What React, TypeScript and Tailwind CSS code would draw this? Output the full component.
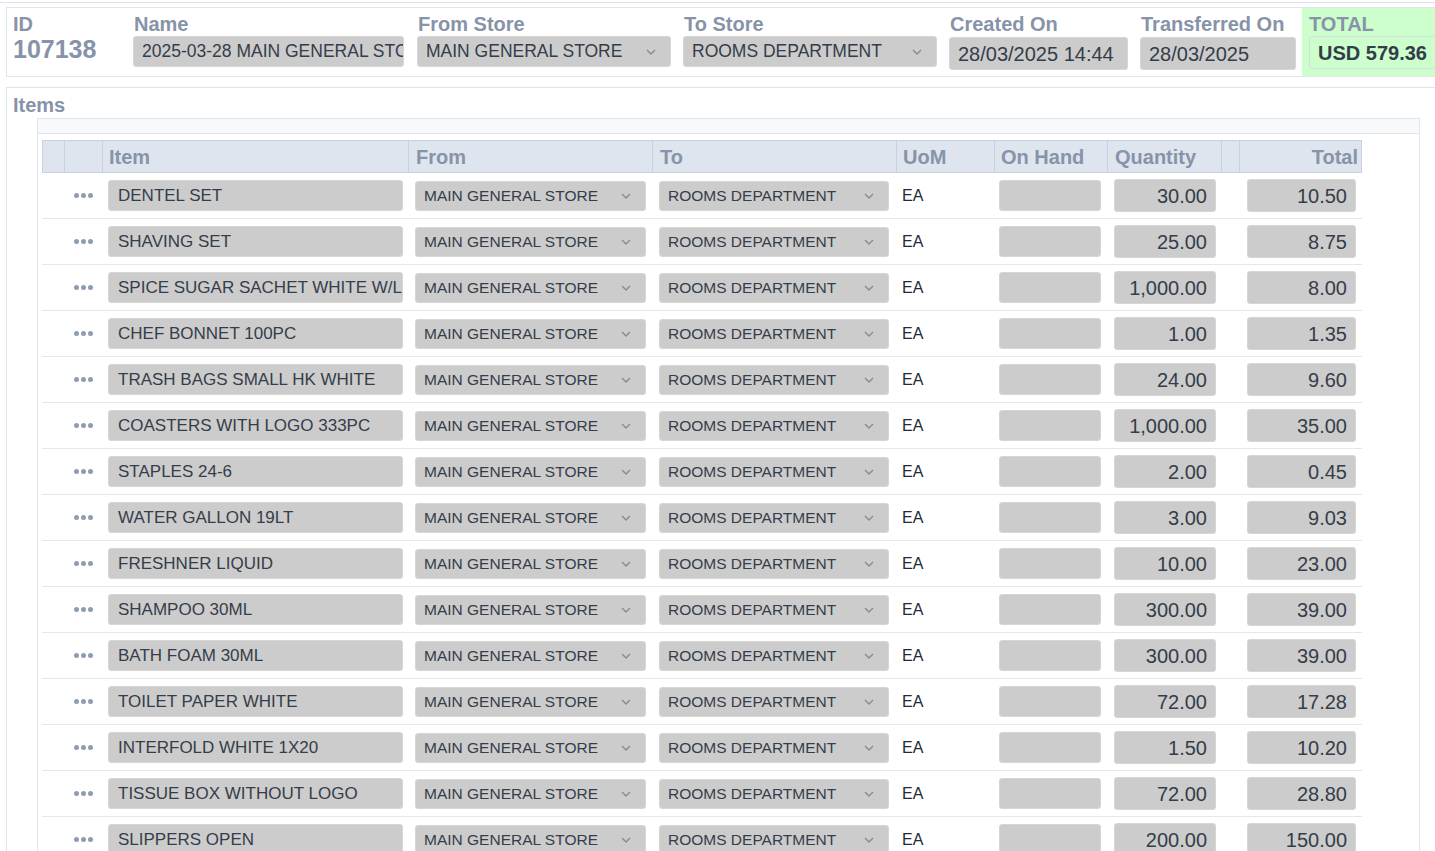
import React from 'react';

type Row = { item: string; qty: string; total: string };

const rows: Row[] = [
  { item: 'DENTEL SET', qty: '30.00', total: '10.50' },
  { item: 'SHAVING SET', qty: '25.00', total: '8.75' },
  { item: 'SPICE SUGAR SACHET WHITE W/LOGO', qty: '1,000.00', total: '8.00' },
  { item: 'CHEF BONNET 100PC', qty: '1.00', total: '1.35' },
  { item: 'TRASH BAGS SMALL HK WHITE', qty: '24.00', total: '9.60' },
  { item: 'COASTERS WITH LOGO 333PC', qty: '1,000.00', total: '35.00' },
  { item: 'STAPLES 24-6', qty: '2.00', total: '0.45' },
  { item: 'WATER GALLON 19LT', qty: '3.00', total: '9.03' },
  { item: 'FRESHNER LIQUID', qty: '10.00', total: '23.00' },
  { item: 'SHAMPOO 30ML', qty: '300.00', total: '39.00' },
  { item: 'BATH FOAM 30ML', qty: '300.00', total: '39.00' },
  { item: 'TOILET PAPER WHITE', qty: '72.00', total: '17.28' },
  { item: 'INTERFOLD WHITE 1X20', qty: '1.50', total: '10.20' },
  { item: 'TISSUE BOX WITHOUT LOGO', qty: '72.00', total: '28.80' },
  { item: 'SLIPPERS OPEN', qty: '200.00', total: '150.00' },
];

const cols = 'grid grid-cols-[22px_38px_306px_244px_244px_98px_113px_114px_18px_123px]';

const Chevron = () => (
  <svg width="10" height="6" viewBox="0 0 10 6" className="shrink-0">
    <path d="M1 1l4 4 4-4" fill="none" stroke="#8a8a8a" strokeWidth="1.3" />
  </svg>
);

const Field: React.FC<{ label: string; className: string; children: React.ReactNode }> = ({ label, className, children }) => (
  <div className={`flex flex-col pt-[4px] ${className}`}>
    <span className="text-[20px] font-bold leading-[24px] text-[#8793a8] pl-[1px]">{label}</span>
    {children}
  </div>
);

const Box = ({ text, cls = '' }: { text: string; cls?: string }) => (
  <div className={`bg-[#cccccc] border border-[#d6d6d6] rounded-[3px] flex items-center overflow-hidden whitespace-nowrap text-[#353d4a] ${cls}`}>
    {text}
  </div>
);

const Select = ({ text, w, small }: { text: string; w: string; small?: boolean }) => (
  <div className={`${w} bg-[#cccccc] border border-[#d6d6d6] rounded-[3px] flex items-center justify-between text-[#353d4a] ${small ? 'h-[30px] pl-[8px] pr-[14px] text-[15.5px]' : 'h-[31px] pl-[8px] pr-[14px] text-[17.5px]'}`}>
    <span className="whitespace-nowrap">{text}</span>
    <Chevron />
  </div>
);

export default function App() {
  return (
    <div className="w-[1435px] h-[851px] overflow-hidden bg-white font-['Liberation_Sans',Arial,sans-serif]">
      <div className="h-[3px] border-b border-[#e1e6ee]" />
      <div className="ml-[6px] mt-[4px] h-[70px] border border-r-0 border-[#dfe5ed] flex">
        <div className="flex flex-col pl-[6px] pt-[4px] w-[126px]">
          <span className="text-[20px] font-bold leading-[24px] text-[#8793a8]">ID</span>
          <span className="text-[25px] font-bold leading-[26px] text-[#8793a8]">107138</span>
        </div>
        <Field label="Name" className="w-[271px]">
          <Box text="2025-03-28 MAIN GENERAL STORE" cls="h-[31px] px-[8px] text-[17.5px]" />
        </Field>
        <Field label="From Store" className="ml-[13px] w-[254px]">
          <Select text="MAIN GENERAL STORE" w="w-[254px]" />
        </Field>
        <Field label="To Store" className="ml-[12px] w-[254px]">
          <Select text="ROOMS DEPARTMENT" w="w-[254px]" />
        </Field>
        <Field label="Created On" className="ml-[12px] w-[179px]">
          <Box text="28/03/2025 14:44" cls="h-[33px] mt-[1px] px-[8px] text-[20px]" />
        </Field>
        <Field label="Transferred On" className="ml-[12px] w-[156px]">
          <Box text="28/03/2025" cls="h-[33px] mt-[1px] px-[8px] text-[20px]" />
        </Field>
        <div className="ml-[6px] flex-1 bg-[#ccffcc] flex flex-col pt-[4px] pl-[7px]">
          <span className="text-[20px] font-bold leading-[24px] text-[#8793a8]">TOTAL</span>
          <div className="h-[33px] border border-r-0 border-[#d4dde6] rounded-l-[4px] flex items-center pl-[8px] text-[20px] font-bold text-[#333c4a]">
            USD 579.36
          </div>
        </div>
      </div>

      <div className="ml-[6px] mt-[10px] border-t border-l border-[#dfe5ed] h-[800px] pt-[5px]">
        <div className="pl-[6px] text-[20px] font-bold leading-[24px] text-[#8793a8]">Items</div>
        <div className="ml-[30px] w-[1383px] mt-[1px] border border-b-0 border-[#dfe5ed] h-[800px]">
          <div className="h-[15px] bg-[#f8f9fb] border-b border-[#dfe5ed]" />
          <div className="ml-[4px] mt-[6px] w-[1320px]">
            <div className={`${cols} h-[33px] bg-[#dee5ee] border border-[#c8d2de] text-[20px] font-bold text-[#8793a8]`}>
              <div className="border-r border-[#c8d2de]" />
              <div className="border-r border-[#c8d2de]" />
              <div className="border-r border-[#c8d2de] flex items-center pl-[6px]">Item</div>
              <div className="border-r border-[#c8d2de] flex items-center pl-[7px]">From</div>
              <div className="border-r border-[#c8d2de] flex items-center pl-[7px]">To</div>
              <div className="border-r border-[#c8d2de] flex items-center pl-[6px]">UoM</div>
              <div className="border-r border-[#c8d2de] flex items-center pl-[6px]">On Hand</div>
              <div className="border-r border-[#c8d2de] flex items-center pl-[7px]">Quantity</div>
              <div className="border-r border-[#c8d2de]" />
              <div className="flex items-center justify-end pr-[5px]">Total</div>
            </div>
            {rows.map((r, i) => (
              <div key={i} className={`${cols} h-[46px] border-b border-[#e3e8ee] items-center`}>
                <div />
                <div className="flex items-center justify-center gap-[2px] pl-[1px]">
                  <span className="w-[5px] h-[5px] rounded-full bg-[#8e9cb0]" />
                  <span className="w-[5px] h-[5px] rounded-full bg-[#8e9cb0]" />
                  <span className="w-[5px] h-[5px] rounded-full bg-[#8e9cb0]" />
                </div>
                <div className="pl-[6px]">
                  <div className="w-[295px] h-[31px] bg-[#cccccc] border border-[#d6d6d6] rounded-[3px] flex items-center pl-[9px] text-[17px] text-[#353d4a] whitespace-nowrap overflow-hidden">
                    {r.item}
                  </div>
                </div>
                <div className="pl-[7px]">
                  <Select text="MAIN GENERAL STORE" w="w-[231px]" small />
                </div>
                <div className="pl-[7px]">
                  <Select text="ROOMS DEPARTMENT" w="w-[230px]" small />
                </div>
                <div className="pl-[6px] text-[16px] text-[#222a35]">EA</div>
                <div className="pl-[5px]">
                  <div className="w-[102px] h-[31px] bg-[#cccccc] border border-[#d6d6d6] rounded-[3px]" />
                </div>
                <div className="pl-[7px]">
                  <div className="w-[102px] h-[33px] bg-[#cccccc] border border-[#d6d6d6] rounded-[3px] flex items-center justify-end pr-[8px] text-[20px] text-[#353d4a]">
                    {r.qty}
                  </div>
                </div>
                <div />
                <div className="pl-[8px]">
                  <div className="w-[109px] h-[33px] bg-[#cccccc] border border-[#d6d6d6] rounded-[3px] flex items-center justify-end pr-[8px] text-[20px] text-[#353d4a]">
                    {r.total}
                  </div>
                </div>
              </div>
            ))}
          </div>
        </div>
      </div>
    </div>
  );
}
